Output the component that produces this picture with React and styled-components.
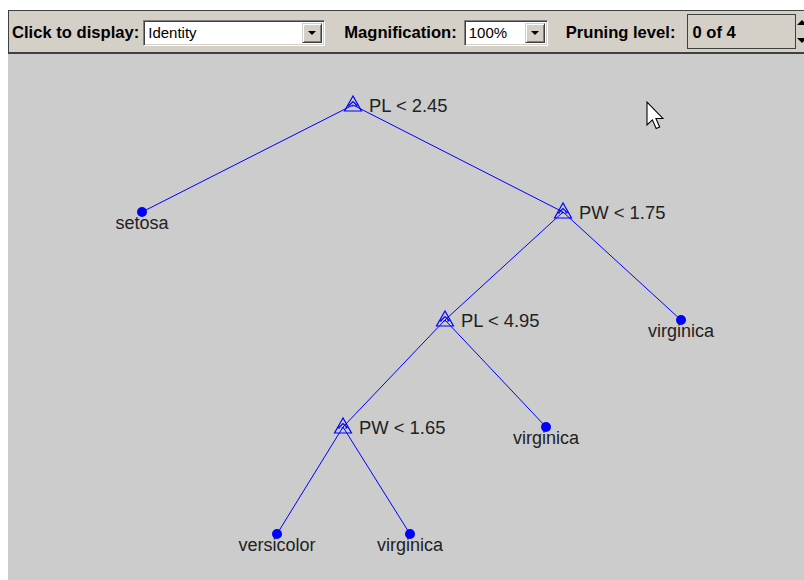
import React from "react";
import styled, { createGlobalStyle } from "styled-components";

const GlobalStyle = createGlobalStyle`
  html, body {
    margin: 0;
    padding: 0;
    background: #ffffff;
    overflow: hidden;
  }
`;

const Window = styled.div`
  width: 804px;
  height: 580px;
  padding: 10px 0 0 8px;
  box-sizing: border-box;
  display: flex;
  flex-direction: column;
  background: #ffffff;
  font-family: "Liberation Sans", Arial, sans-serif;
`;

const Toolbar = styled.div`
  height: 41px;
  flex: none;
  display: flex;
  align-items: center;
  padding-left: 3px;
  background: #d4d0c8;
  border-top: 1px solid #404040;
  border-left: 1px solid #404040;
  border-bottom: 2px solid #404040;
  overflow: hidden;
  white-space: nowrap;
`;

const Group = styled.div`
  display: flex;
  align-items: center;
  flex: none;
  gap: ${(p) => p.$gap}px;
  margin-right: ${(p) => p.$after || 0}px;
`;

const Label = styled.span`
  font-size: 16.6px;
  font-weight: 700;
  color: #000000;
  padding-top: 3px;
`;

const Select = styled.div`
  width: ${(p) => p.$width}px;
  height: 26px;
  box-sizing: border-box;
  display: flex;
  align-items: center;
  justify-content: space-between;
  background: #ffffff;
  border-top: 1px solid #808080;
  border-left: 1px solid #808080;
  border-bottom: 1px solid #ffffff;
  border-right: 1px solid #ffffff;
  box-shadow: inset 1px 1px 0 #404040, inset -1px -1px 0 #d4d0c8;
  padding: 2px;
  margin-top: 2px;
`;

const SelectText = styled.span`
  font-size: 15px;
  color: #000000;
  padding-left: 2px;
`;

const DropButton = styled.div`
  width: 20px;
  height: 20px;
  box-sizing: border-box;
  background: #d4d0c8;
  border-top: 1px solid #d4d0c8;
  border-left: 1px solid #d4d0c8;
  border-bottom: 1px solid #404040;
  border-right: 1px solid #404040;
  box-shadow: inset 1px 1px 0 #ffffff, inset -1px -1px 0 #808080;
  display: flex;
  align-items: center;
  justify-content: center;

  &::after {
    content: "";
    border-left: 4px solid transparent;
    border-right: 4px solid transparent;
    border-top: 4px solid #000000;
    margin-top: 1px;
  }
`;

const LevelBox = styled.div`
  width: 109px;
  height: 35px;
  box-sizing: border-box;
  border: 1px solid #404040;
  background: #d4d0c8;
  display: flex;
  align-items: center;
  padding: 2px 0 0 4px;
  font-size: 16.6px;
  font-weight: 700;
`;

const Spinner = styled.div`
  width: 16px;
  height: 35px;
  display: flex;
  flex-direction: column;
  flex: none;
`;

const SpinButton = styled.div`
  flex: 1;
  display: flex;
  align-items: center;
  justify-content: flex-start;
  background: #d4d0c8;

  &::after {
    content: "";
    border-left: 5px solid transparent;
    border-right: 5px solid transparent;
    ${(p) => (p.$up ? "border-bottom" : "border-top")}: 5px solid #000000;
  }
`;

const Canvas = styled.div`
  flex: 1;
  position: relative;
  background: #cccccc;
`;

const TreeSvg = styled.svg`
  display: block;
  width: 100%;
  height: 100%;
`;

const BLUE = "#0000ff";

const branches = [
  { id: "r", x: 353, y: 104, label: "PL < 2.45" },
  { id: "b", x: 563, y: 211, label: "PW < 1.75" },
  { id: "c", x: 445, y: 319, label: "PL < 4.95" },
  { id: "d", x: 343, y: 426, label: "PW < 1.65" },
];

const leaves = [
  { id: "setosa", x: 142, y: 211, label: "setosa" },
  { id: "v1", x: 681, y: 319, label: "virginica" },
  { id: "v2", x: 546, y: 426, label: "virginica" },
  { id: "vc", x: 277, y: 533, label: "versicolor" },
  { id: "v3", x: 410, y: 533, label: "virginica" },
];

const edges = [
  ["r", "setosa"],
  ["r", "b"],
  ["b", "c"],
  ["b", "v1"],
  ["c", "d"],
  ["c", "v2"],
  ["d", "vc"],
  ["d", "v3"],
];

const nodeById = Object.fromEntries(
  [...branches, ...leaves].map((n) => [n.id, n])
);

const Triangle = ({ x, y }) => (
  <g fill="none" stroke={BLUE} strokeWidth="1.2">
    <polygon points={`${x},${y - 9} ${x - 8.5},${y + 6} ${x + 8.5},${y + 6}`} />
    <polyline points={`${x - 4.5},${y + 1} ${x},${y - 3.5} ${x + 4.5},${y + 1}`} />
    <line x1={x - 5} y1={y + 1} x2={x + 5} y2={y + 1} strokeDasharray="2 1.5" />
  </g>
);

const Tree = () => (
  <TreeSvg viewBox="8 53 796 527" preserveAspectRatio="none">
    {edges.map(([a, b]) => (
      <line
        key={a + b}
        x1={nodeById[a].x}
        y1={nodeById[a].y}
        x2={nodeById[b].x}
        y2={nodeById[b].y}
        stroke={BLUE}
        strokeWidth="1"
      />
    ))}
    {branches.map((n) => (
      <g key={n.id}>
        <Triangle x={n.x} y={n.y} />
        <text
          x={n.x + 16}
          y={n.y + 7}
          fontFamily="Liberation Sans, Arial, sans-serif"
          fontSize="18.4"
          fill="#222222"
        >
          {n.label}
        </text>
      </g>
    ))}
    {leaves.map((n) => (
      <g key={n.id}>
        <circle cx={n.x} cy={n.y} r="5" fill={BLUE} />
        <text
          x={n.x}
          y={n.y + 17}
          textAnchor="middle"
          fontFamily="Liberation Sans, Arial, sans-serif"
          fontSize="18"
          fill="#222222"
        >
          {n.label}
        </text>
      </g>
    ))}
    {/* mouse pointer */}
    <path
      transform="translate(647 101) scale(1.35)"
      d="M0 0 L0 17 L4 13.2 L6.8 19.6 L9.4 18.5 L6.6 12.2 L11.8 12.2 Z"
      fill="#ffffff"
      stroke="#000000"
      strokeWidth="0.8"
      strokeLinejoin="miter"
    />
  </TreeSvg>
);

export default function App() {
  return (
    <>
      <GlobalStyle />
      <Window>
        <Toolbar>
          <Group $gap={4} $after={19}>
            <Label>Click to display:</Label>
            <Select $width={182}>
              <SelectText>Identity</SelectText>
              <DropButton />
            </Select>
          </Group>
          <Group $gap={7} $after={18}>
            <Label>Magnification:</Label>
            <Select $width={84}>
              <SelectText>100%</SelectText>
              <DropButton />
            </Select>
          </Group>
          <Group $gap={12}>
            <Label>Pruning level:</Label>
            <Group $gap={1}>
              <LevelBox>0 of 4</LevelBox>
              <Spinner>
                <SpinButton $up />
                <SpinButton />
              </Spinner>
            </Group>
          </Group>
        </Toolbar>
        <Canvas>
          <Tree />
        </Canvas>
      </Window>
    </>
  );
}
